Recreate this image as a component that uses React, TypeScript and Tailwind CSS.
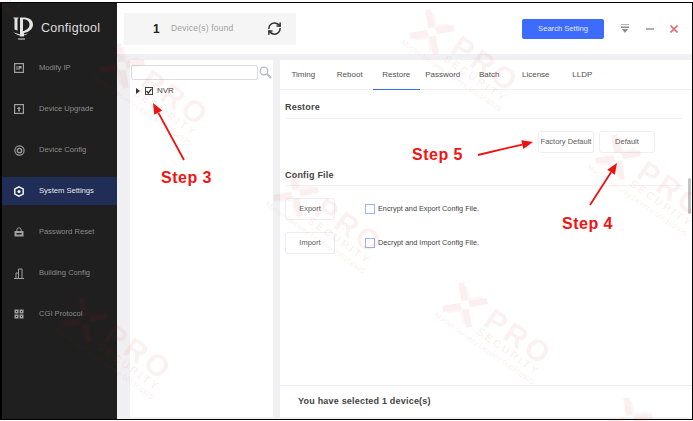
import { RefreshCw } from 'lucide-react';

const FONT = "font-['Liberation_Sans',Arial,sans-serif]";

function NavIcon({ name }: { name: string }) {
  // sidebar glyphs
  const c = 'currentColor';
  if (name === 'ip')
    return (
      <svg width="10" height="10" viewBox="0 0 10 10">
        <rect x="0.6" y="0.6" width="8.8" height="8.8" fill="none" stroke={c} strokeWidth="1.2" />
        <rect x="2.5" y="3" width="1" height="4" fill={c} />
        <path d="M4.5 3H7.500V5.500H5.500V7H4.500z" fill={c} />
      </svg>
    );
  if (name === 'upgrade')
    return (
      <svg width="10" height="10" viewBox="0 0 10 10">
        <rect x="0.6" y="0.6" width="8.8" height="8.8" fill="none" stroke={c} strokeWidth="1.2" />
        <path d="M5 2.5 7.2 5H5.8v2.5H4.2V5H2.8z" fill={c} />
      </svg>
    );
  if (name === 'config')
    return (
      <svg width="11" height="11" viewBox="0 0 11 11">
        <circle cx="5.5" cy="5.5" r="4.6" fill="none" stroke={c} strokeWidth="1.1" />
        <circle cx="5.5" cy="5.5" r="2.2" fill="none" stroke={c} strokeWidth="1.3" />
      </svg>
    );
  if (name === 'settings')
    return (
      <svg width="10" height="11" viewBox="0 0 10 11">
        <path d="M5 .8 9.2 3v5L5 10.2.8 8V3z" fill="none" stroke={c} strokeWidth="1.4" />
        <circle cx="5" cy="5.5" r="1.5" fill={c} />
      </svg>
    );
  if (name === 'password')
    return (
      <svg width="10" height="10" viewBox="0 0 10 10">
        <path d="M2.8 4V2.8C2.8 1.6 3.8.9 5 .9s2.200.7 2.200 1.900V4" fill="none" stroke={c} />
        <path d="M.5 4h9v5.500h-9z M2.500 6v1.500h5V6z" fill={c} fillRule="evenodd" />
      </svg>
    );
  if (name === 'building')
    return (
      <svg width="10" height="11" viewBox="0 0 10 11">
        <path d="M0 10.500h10M2 10.500V5h2.500M4.500 10.500V1H8v9.500" fill="none" stroke={c} />
      </svg>
    );
  return (
    <svg width="10" height="10" viewBox="0 0 10 10">
      <path d="M.5.500h4v4h-4zM5.500.500h4v4h-4zM.5 5.500h4v4h-4zM5.500 5.500h4v4h-4z M2 2v1h1V2zM7 2v1h1V2zM2 7v1h1V7zM7 7v1h1V7z" fill={c} fillRule="evenodd" />
    </svg>
  );
}

function Watermark({ className, markOnly }: { className: string; markOnly?: boolean }) {
  // faint diagonal stamp that sits over the whole window
  return (
    <div className={`absolute pointer-events-none w-[125px] rotate-[35deg] origin-[19px_19px] ${className}`}>
      <div className="flex">
        <svg width="38" height="38" viewBox="0 0 38 38" className="shrink-0">
          <path d="M3 3 16 16M22 22 35 35M35 3 22 16M16 22 3 35" stroke="#d81f1f" strokeOpacity="0.07" strokeWidth="6" fill="none" />
          <path d="M9 3 19 13 29 3M9 35 19 25 29 35" stroke="#d81f1f" strokeOpacity="0.04" strokeWidth="3" fill="none" />
        </svg>
        {!markOnly && (
          <div className="ml-[6px] pt-[4px] flex flex-col">
            <span className="h-[22px] text-[30px] leading-[22px] font-bold tracking-[3.400px] text-[#d81f1f]/8">PRO</span>
            <span className="h-[10px] mt-[1px] text-[11px] leading-[10px] font-bold tracking-[2.400px] text-[#d81f1f]/8">SECURITY</span>
          </div>
        )}
      </div>
      {!markOnly && (
        <div className="mt-[2px] h-[8px] text-[7.500px] leading-[8px] whitespace-nowrap text-[#d81f1f]/10">Master Security Licence 000108925</div>
      )}
    </div>
  );
}

function Arrow({ x1, y1, x2, y2 }: { x1: number; y1: number; x2: number; y2: number }) {
  const ang = Math.atan2(y2 - y1, x2 - x1);
  const bx = x2 - Math.cos(ang) * 11;
  const by = y2 - Math.sin(ang) * 11;
  const nx = -Math.sin(ang) * 4.5;
  const ny = Math.cos(ang) * 4.5;
  return (
    <>
      <line x1={x1} y1={y1} x2={bx} y2={by} stroke="#f01010" strokeWidth="1.800" />
      <polygon points={`${x2},${y2} ${bx + nx},${by + ny} ${bx - nx},${by - ny}`} fill="#f01010" />
    </>
  );
}

function StepLabel({ text, className }: { text: string; className: string }) {
  return <span className={`absolute text-[16px] leading-none font-bold text-[#f01414] tracking-[0.5px] ${className}`}>{text}</span>;
}

function OutlineButton({ label, className }: { label: string; className: string }) {
  return (
    <button className={`flex items-center justify-center rounded-[3px] border border-[#eeeef2] bg-white text-[7.500px] text-[#5c5c5c] ${className}`}>
      {label}
    </button>
  );
}

export default function App() {
  const navItems = [
    { name: 'Modify IP', icon: 'ip' },
    { name: 'Device Upgrade', icon: 'upgrade' },
    { name: 'Device Config', icon: 'config' },
    { name: 'System Settings', icon: 'settings', active: true },
    { name: 'Password Reset', icon: 'password' },
    { name: 'Building Config', icon: 'building' },
    { name: 'CGI Protocol', icon: 'cgi' },
  ];
  const tabs = ['Timing', 'Reboot', 'Restore', 'Password', 'Batch', 'License', 'LLDP'];

  return (
    <div className={`${FONT} relative w-[693px] h-[421px] bg-white overflow-hidden pt-[2px] pb-[1px]`}>
      <div className="flex h-full border-[1px] border-l-[2px] border-black">
        {/* Sidebar */}
        <aside className="w-[115px] shrink-0 bg-[#1f1f1f] flex flex-col">
          <div className="h-[50px] flex items-center pl-[11px] gap-[7px] shrink-0">
            <svg width="21" height="23" viewBox="0 0 21 23">
              <path d="M.5.500h5v1H4.500V13.500c-1.200-.2-2.200-.5-3-1V1.500H.5z" fill="#e4e4e4" />
              <path d="M7 .5h3c6 0 10 2.500 10 7 0 4.500-4 7.500-9 8.500v3.500H7zM10 2.200v12c3.500-1 6.500-3 6.500-6.700 0-3.600-3-5.300-6.500-5.300z" fill="#e4e4e4" fillRule="evenodd" />
              <path d="M0 14.500c3 2.500 9 4 15 2-4 3-10 3.500-15-2zM5 21.500h7v1H5z" fill="#e4e4e4" />
            </svg>
            <span className="text-[12.500px] text-[#dedede] tracking-[0.3px]">Configtool</span>
          </div>
          <nav className="flex flex-col gap-[13px] pt-[1px]">
            {navItems.map((item) => (
              <div
                key={item.name}
                className={`h-[28px] flex items-center pl-[12px] ${item.active ? 'bg-[#1f2d57] text-[#e8e8e8]' : 'text-[#8c8c8c]'}`}
              >
                <span className={`w-[25px] flex ${item.active ? 'text-white' : 'text-[#a0a0a0]'}`}>
                  <NavIcon name={item.icon} />
                </span>
                <span className="text-[7.600px] whitespace-nowrap">{item.name}</span>
              </div>
            ))}
          </nav>
        </aside>

        {/* Main */}
        <main className="flex-1 min-w-0 flex flex-col">
          <header className="h-[51px] shrink-0 flex items-center pl-[7px] pr-[14px] bg-white">
            <div className="w-[172px] h-[32px] bg-[#f5f5f5] flex items-center pl-[29px]">
              <span className="w-[18px] text-[12px] font-bold text-[#222]">1</span>
              <span className="text-[8.500px] text-[#a3a3a3] tracking-[0.2px]">Device(s) found</span>
              <RefreshCw size={15} strokeWidth={2.4} className="ml-[33px] text-[#333]" />
            </div>
            <button className="ml-auto w-[82px] h-[20px] rounded-[2px] bg-[#3d6bfb] text-[#e4eaff] text-[7.600px] mr-[17px]">Search Setting</button>
            <svg width="8" height="9" viewBox="0 0 8 9" className="mr-[17px]">
              <path d="M0 0h8v1H0z" fill="#b5b5b5" />
              <path d="M0 2.500h8v1.500H0zM.8 5h6.400L4 9z" fill="#8d8d8d" />
            </svg>
            <span className="w-[8px] h-[2px] bg-[#b0b0b4] mr-[16px]" />
            <svg width="8" height="8" viewBox="0 0 8 8">
              <path d="M.5.500l7 7M7.500.500l-7 7" stroke="#e86a6e" strokeWidth="1.600" fill="none" />
            </svg>
          </header>

          <div className="flex-1 min-h-0 flex bg-[#f0f0f3] pt-[6px] pb-[2px] pl-[13px]">
            {/* Device tree */}
            <section className="w-[143px] shrink-0 bg-white px-[1px] pt-[5px]">
              <div className="flex items-center">
                <div className="w-[127px] h-[15px] rounded-[2px] border border-[#dcdcdf]" />
                <svg width="13" height="13" viewBox="0 0 13 13" className="ml-[1px]">
                  <circle cx="5" cy="5" r="3.800" fill="none" stroke="#b5bcc4" strokeWidth="1.300" />
                  <path d="M8 8l4 4" stroke="#b5bcc4" strokeWidth="2" />
                </svg>
              </div>
              <div className="flex items-center mt-[6px] pl-[5px] h-[10px]">
                <span className="w-0 h-0 border-y-[3px] border-y-transparent border-l-[4px] border-l-[#333]" />
                <span className="ml-[5px] w-[8px] h-[8px] border border-[#444] flex items-center justify-center">
                  <svg width="6" height="6" viewBox="0 0 6 6">
                    <path d="M.5 3 2.300 5 5.500 .8" fill="none" stroke="#222" strokeWidth="1.200" />
                  </svg>
                </span>
                <span className="ml-[4px] text-[8px] text-[#4a4a4a]">NVR</span>
              </div>
            </section>

            {/* Settings panel */}
            <section className="ml-[7px] flex-1 min-w-0 bg-white flex flex-col relative">
              <div className="h-[30px] shrink-0 flex border-b border-[#f0f0f0]">
                {tabs.map((tab, i) => (
                  <div
                    key={tab}
                    className={`w-[46.500px] h-[30px] flex items-center justify-center text-[8px] text-[#505050] ${i === 2 ? 'border-b-[1.500px] border-[#3d6bfb]' : ''}`}
                  >
                    {tab}
                  </div>
                ))}
              </div>
              <div className="flex-1 min-h-0 overflow-hidden px-[5px] relative">
                <h3 className="mt-[12px] h-[17px] text-[9px] leading-[11px] font-bold text-[#444] tracking-[0.2px] border-b border-[#f0f0f0] mr-[5px]">Restore</h3>
                <div className="flex justify-end gap-[5px] mt-[12px] pr-[32px]">
                  <OutlineButton label="Factory Default" className="w-[56px] h-[22px] whitespace-nowrap" />
                  <OutlineButton label="Default" className="w-[56px] h-[22px]" />
                </div>
                <h3 className="mt-[17px] h-[16px] text-[9px] leading-[11px] font-bold text-[#444] tracking-[0.2px] border-b border-[#f0f0f0] mr-[5px]">Config File</h3>
                <div className="flex items-center mt-[12px]">
                  <OutlineButton label="Export" className="w-[50px] h-[22px]" />
                  <span className="ml-[30px] w-[10px] h-[10px] border border-[#9fb4f5]" />
                  <span className="ml-[3px] text-[7.300px] text-[#444]">Encrypt and Export Config File.</span>
                </div>
                <div className="flex items-center mt-[12px]">
                  <OutlineButton label="Import" className="w-[50px] h-[22px]" />
                  <span className="ml-[30px] w-[10px] h-[10px] border border-[#9fb4f5]" />
                  <span className="ml-[3px] text-[7.300px] text-[#444]">Decrypt and Import Config File.</span>
                </div>
                <h3 className="mt-[130px] text-[9px] leading-[11px] font-bold text-[#444]">Modify Password</h3>
                <div className="absolute right-[1px] top-[88px] w-[3px] h-[36px] rounded-full bg-[#c4c4c4]" />
              </div>
              <div className="absolute left-0 right-0 bottom-0 h-[32px] bg-white border-t border-[#eeeeee] flex items-center pl-[18px]">
                <span className="text-[9px] font-bold text-[#444] tracking-[0.2px]">You have selected 1 device(s)</span>
              </div>
            </section>
          </div>
        </main>
      </div>

      {/* Watermarks */}
      <Watermark className="left-[-69px] top-[-79px]" />
      <Watermark className="left-[103px] top-[47px]" />
      <Watermark className="left-[413px] top-[13px]" />
      <Watermark className="left-[66px] top-[301px]" />
      <Watermark className="left-[277px] top-[175px]" />
      <Watermark className="left-[446px] top-[286px]" />
      <Watermark className="left-[599px] top-[138px]" />
      <Watermark className="left-[611px] top-[401px]" markOnly />

      {/* Callouts drawn on top of the screenshot */}
      <svg width="693" height="421" className="absolute left-0 top-0 pointer-events-none">
        <Arrow x1={184} y1={160} x2={153} y2={103} />
        <Arrow x1={478} y1={155} x2={533} y2={142} />
        <Arrow x1={590} y1={205} x2={617} y2={163} />
      </svg>
      <StepLabel text="Step 3" className="left-[161px] top-[170px]" />
      <StepLabel text="Step 5" className="left-[412px] top-[147px]" />
      <StepLabel text="Step 4" className="left-[562px] top-[216px]" />
    </div>
  );
}
